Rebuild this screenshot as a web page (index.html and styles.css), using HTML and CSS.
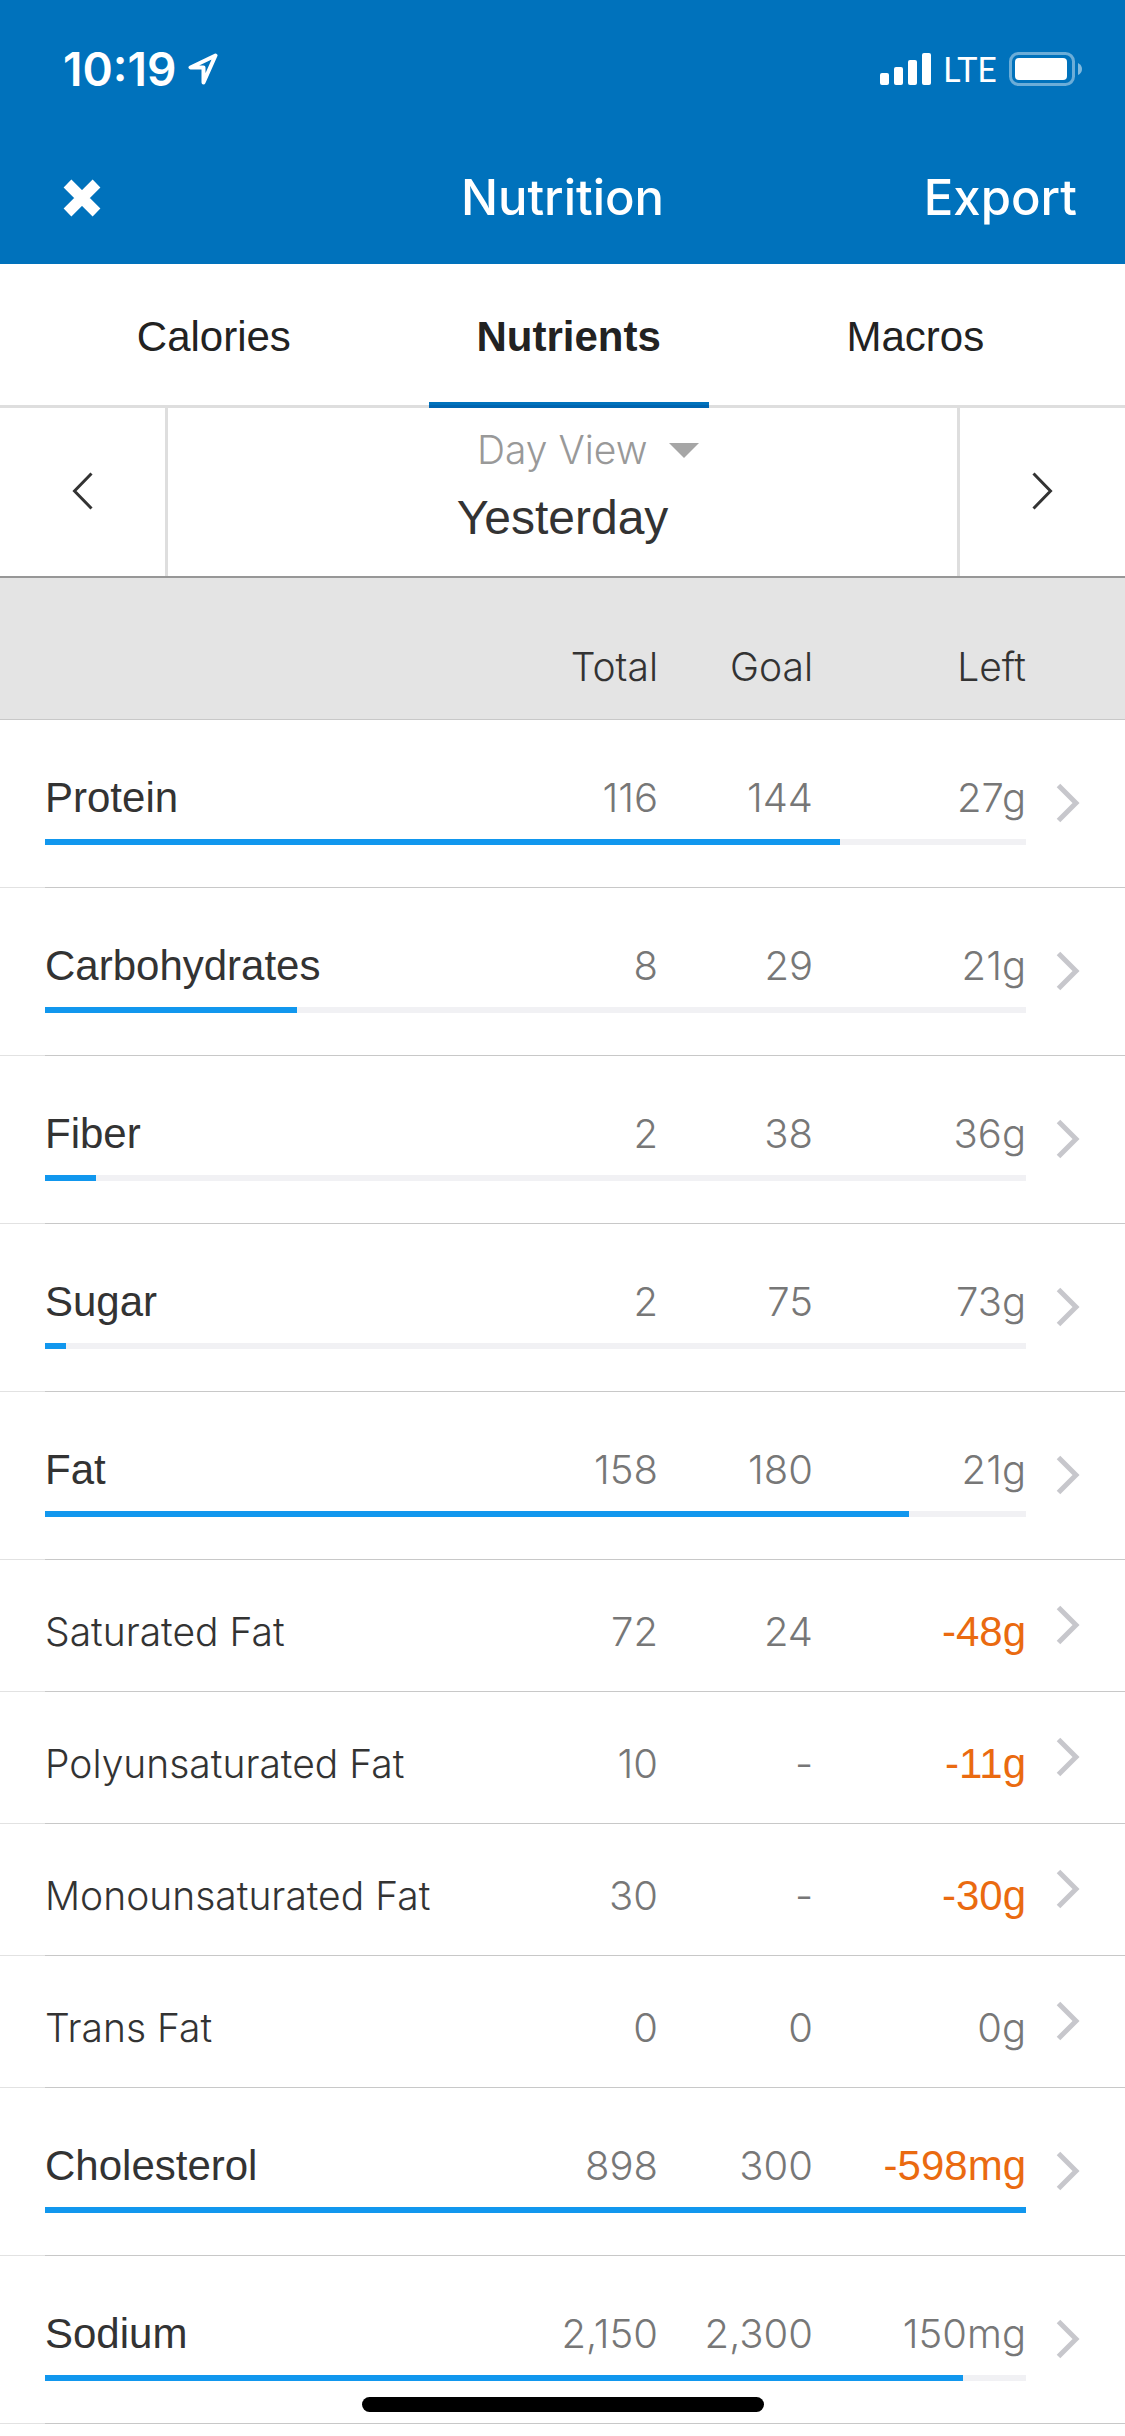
FILE: index.html
```html
<!DOCTYPE html>
<html lang="en">
<head>
<meta charset="utf-8">
<meta name="viewport" content="width=device-width, initial-scale=1">
<title>Nutrition</title>
<link rel="stylesheet" href="styles.css">
</head>
<body>
<svg class="sprite" aria-hidden="true">
  <symbol id="chevron" viewBox="0 0 24 40"><path d="M2.500 2.500L20 20L2.500 37.500" fill="none" stroke="currentColor" stroke-width="5"/></symbol>
</svg>

<header class="top">
  <div class="status">
    <div class="status-left">
      <span class="time">10:19</span>
      <svg width="30" height="32" viewBox="0 0 30 32" aria-hidden="true"><path d="M27.500 2.500L2.500 14.500H15.500V29.500Z" fill="none" stroke="#fff" stroke-width="4" stroke-linejoin="round"/></svg>
    </div>
    <div class="status-right">
      <svg width="51" height="32" viewBox="0 0 51 32" fill="#fff" aria-hidden="true"><rect y="20" width="9" height="12" rx="2"/><rect x="14" y="14" width="9" height="18" rx="2"/><rect x="28" y="7" width="9" height="25" rx="2"/><rect x="42" width="9" height="32" rx="2"/></svg>
      <span class="carrier">LTE</span>
      <svg width="73" height="34" viewBox="0 0 73 34" aria-hidden="true"><rect x="1.500" y="1.500" width="63" height="31" rx="8" fill="none" stroke="#fff" stroke-opacity=".42" stroke-width="3"/><rect x="6" y="6" width="52" height="22" rx="4" fill="#fff"/><path d="M69 11Q73 13 73 17Q73 21 69 23Z" fill="#fff" fill-opacity=".5"/></svg>
    </div>
  </div>
  <nav class="navbar">
    <button class="close" type="button" aria-label="Close"><svg width="38" height="38" viewBox="0 0 38 38" aria-hidden="true"><path d="M4.500 4.500L33.500 33.500M33.500 4.500L4.500 33.500" stroke="#fff" stroke-width="11"/></svg></button>
    <h1 class="title">Nutrition</h1>
    <button class="export" type="button">Export</button>
  </nav>
</header>

<main>
  <nav class="tabs">
    <a class="tab" href="#calories">Calories</a>
    <a class="tab tab-active" href="#nutrients" aria-current="page">Nutrients</a>
    <a class="tab" href="#macros">Macros</a>
  </nav>

  <section class="period">
    <button class="step step-prev" type="button" aria-label="Previous day"><svg width="21" height="38" viewBox="0 0 21 38" aria-hidden="true"><path d="M19.500 1.500L2.500 19L19.500 36.500" fill="none" stroke="#333" stroke-width="3"/></svg></button>
    <div class="period-body">
      <div class="view">
        <select class="view-select" aria-label="View"><option>Day View</option></select>
        <svg class="caret" width="30" height="15" viewBox="0 0 30 15" aria-hidden="true"><path d="M0 0H30L15 15Z" fill="#a6a6a6"/></svg>
      </div>
      <p class="date">Yesterday</p>
    </div>
    <button class="step step-next" type="button" aria-label="Next day"><svg width="21" height="38" viewBox="0 0 21 38" aria-hidden="true"><path d="M1.500 1.500L18.500 19L1.500 36.500" fill="none" stroke="#333" stroke-width="3"/></svg></button>
  </section>

  <table class="nutrients">
    <thead>
      <tr class="head"><td></td><th scope="col">Total</th><th scope="col">Goal</th><th scope="col">Left</th></tr>
    </thead>
    <tbody>
      <tr class="row"><th scope="row">Protein</th><td>116</td><td>144</td><td>27g</td><td class="more"><button type="button" aria-label="Protein details"><svg><use href="#chevron"/></svg></button></td><td class="meter"><div class="track"><div class="fill" style="width:81%"></div></div></td></tr>
      <tr class="row"><th scope="row">Carbohydrates</th><td>8</td><td>29</td><td>21g</td><td class="more"><button type="button" aria-label="Carbohydrates details"><svg><use href="#chevron"/></svg></button></td><td class="meter"><div class="track"><div class="fill" style="width:25.700%"></div></div></td></tr>
      <tr class="row"><th scope="row">Fiber</th><td>2</td><td>38</td><td>36g</td><td class="more"><button type="button" aria-label="Fiber details"><svg><use href="#chevron"/></svg></button></td><td class="meter"><div class="track"><div class="fill" style="width:5.200%"></div></div></td></tr>
      <tr class="row"><th scope="row">Sugar</th><td>2</td><td>75</td><td>73g</td><td class="more"><button type="button" aria-label="Sugar details"><svg><use href="#chevron"/></svg></button></td><td class="meter"><div class="track"><div class="fill" style="width:2.100%"></div></div></td></tr>
      <tr class="row"><th scope="row">Fat</th><td>158</td><td>180</td><td>21g</td><td class="more"><button type="button" aria-label="Fat details"><svg><use href="#chevron"/></svg></button></td><td class="meter"><div class="track"><div class="fill" style="width:88.100%"></div></div></td></tr>
      <tr class="row sub"><th scope="row">Saturated Fat</th><td>72</td><td>24</td><td class="over">-48g</td><td class="more"><button type="button" aria-label="Saturated Fat details"><svg><use href="#chevron"/></svg></button></td></tr>
      <tr class="row sub"><th scope="row">Polyunsaturated Fat</th><td>10</td><td>-</td><td class="over">-11g</td><td class="more"><button type="button" aria-label="Polyunsaturated Fat details"><svg><use href="#chevron"/></svg></button></td></tr>
      <tr class="row sub"><th scope="row">Monounsaturated Fat</th><td>30</td><td>-</td><td class="over">-30g</td><td class="more"><button type="button" aria-label="Monounsaturated Fat details"><svg><use href="#chevron"/></svg></button></td></tr>
      <tr class="row sub"><th scope="row">Trans Fat</th><td>0</td><td>0</td><td>0g</td><td class="more"><button type="button" aria-label="Trans Fat details"><svg><use href="#chevron"/></svg></button></td></tr>
      <tr class="row"><th scope="row">Cholesterol</th><td>898</td><td>300</td><td class="over">-598mg</td><td class="more"><button type="button" aria-label="Cholesterol details"><svg><use href="#chevron"/></svg></button></td><td class="meter"><div class="track"><div class="fill" style="width:100%"></div></div></td></tr>
      <tr class="row"><th scope="row">Sodium</th><td>2,150</td><td>2,300</td><td>150mg</td><td class="more"><button type="button" aria-label="Sodium details"><svg><use href="#chevron"/></svg></button></td><td class="meter"><div class="track"><div class="fill" style="width:93.600%"></div></div></td></tr>
    </tbody>
  </table>
</main>

<div class="home-indicator"></div>
</body>
</html>
```

FILE: styles.css
```css
:root {
  --brand: #0072bc;
  --accent: #1197ee;
  --text: #333;
  --muted: #777;
  --line: #c8c8c8;
  --regular: "Liberation Sans", Arial, sans-serif;
  --light: Inter, "Liberation Sans", sans-serif;
}

* { box-sizing: border-box; }

body {
  margin: 0;
  min-height: 100vh;
  background: #fff;
  color: var(--text);
  font: 42px/48px var(--regular);
}

button {
  padding: 0;
  border: 0;
  background: none;
  color: inherit;
  font: inherit;
}

svg { display: block; }
.sprite { position: absolute; width: 0; height: 0; }

/* Status bar and title */
.top {
  background: var(--brand);
  color: #fff;
  font-family: Inter, sans-serif;
}

.status {
  display: flex;
  justify-content: space-between;
  height: 138px;
  padding: 0 43px 0 63px;
}

.status-left,
.status-right { display: flex; align-items: center; gap: 12px; }

.time { font-size: 46px; font-weight: 600; }
.carrier { font-family: Lato, sans-serif; font-size: 34px; }

.navbar {
  display: grid;
  grid-template-columns: 1fr auto 1fr;
  align-items: center;
  height: 126px;
  padding: 0 48px 6px;
}

.close { justify-self: start; padding-left: 15px; }
.title { margin: 0; font-size: 49px; font-weight: 500; }
.export { justify-self: end; font-size: 49px; font-weight: 500; }

/* Tabs */
.tabs {
  display: flex;
  justify-content: space-around;
  padding: 0 48px 0 44px;
  border-bottom: 3px solid #dedede;
}

.tab {
  position: relative;
  padding: 49px 0 44px;
  color: #222;
  text-decoration: none;
}

.tab-active { font-weight: 700; }

.tab-active::after {
  content: "";
  position: absolute;
  inset: auto -48px -3px;
  height: 3px;
  border-bottom: 3px solid #0065b0;
  background: var(--brand);
}

/* Period picker */
.period {
  display: grid;
  grid-template-columns: 168px 1fr 168px;
  border-bottom: 2px solid #979797;
}

.step { display: grid; place-items: center; padding-bottom: 2px; }
.step-prev { border-right: 3px solid #dedede; }
.step-next { border-left: 3px solid #dedede; }

.period-body {
  display: grid;
  gap: 16px;
  padding: 18px 0 30px;
  text-align: center;
}

.view {
  display: grid;
  grid-template-columns: 1fr auto 1fr;
  align-items: center;
  column-gap: 21px;
}

.view-select {
  grid-column: 2;
  appearance: none;
  margin: 0;
  padding: 0;
  border: 0;
  background: none;
  color: #999;
  font: 300 39px/48px var(--light);
}

.date { margin: 0; font-size: 48px; line-height: 56px; }

/* Nutrient table */
.nutrients,
.nutrients thead,
.nutrients tbody { display: block; }

.head,
.row {
  display: grid;
  grid-template-columns: 1fr 155px 155px 213px 54px;
  padding: 0 45px;
}

.nutrients th,
.nutrients td {
  padding: 0;
  font-weight: 400;
  text-align: right;
}

.nutrients th[scope="row"] { text-align: left; }

.nutrients .head {
  padding: 65px 45px 28px;
  border-bottom: 1px solid var(--line);
  background: #e4e4e4;
}

.nutrients .head th { font: 300 39px/48px var(--light); }

.row {
  background: linear-gradient(to right, #e2e2e2 45px, var(--line) 45px) bottom / 100% 1px no-repeat;
}

.nutrients .row > th,
.nutrients .row > td { padding-top: 54px; }

.nutrients .row > td {
  color: var(--muted);
  font: 300 40px/48px var(--light);
}

.nutrients .sub > th,
.nutrients .sub > td { padding: 48px 0 36px; }

.nutrients .sub > th { font: 300 39px/48px var(--light); }

.nutrients .row > .over {
  color: #ea6a10;
  font: 400 42px/48px var(--regular);
}

.nutrients .row > .more {
  grid-area: 1 / 5 / span 2 / 6;
  align-self: center;
  justify-self: end;
  padding: 0 0 3px;
}

.nutrients .sub > .more { grid-row: 1; }

.more button { display: block; color: #c7c7cc; }
.more svg { width: 24px; height: 40px; }

.nutrients .row > .meter {
  grid-area: 2 / 1 / 3 / 5;
  padding: 17px 0 43px;
}

.track { height: 6px; background: #f1f1f4; }
.fill { height: 6px; background: var(--accent); }

.home-indicator {
  position: fixed;
  bottom: 24px;
  left: 50%;
  width: 402px;
  height: 15px;
  margin-left: -201px;
  border-radius: 8px;
  background: #000;
}
```
